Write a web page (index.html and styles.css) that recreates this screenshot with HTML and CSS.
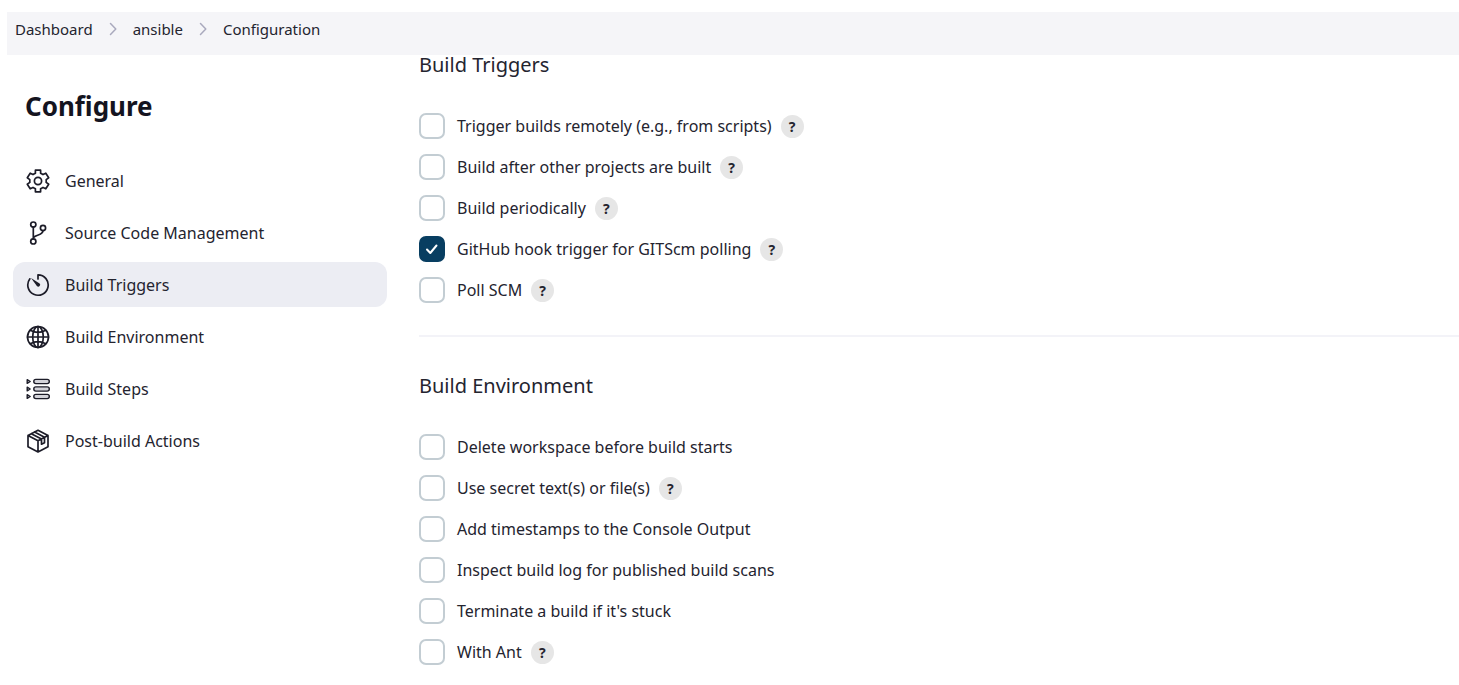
FILE: index.html
```html
<!DOCTYPE html>
<html lang="en">
<head>
<meta charset="utf-8">
<title>ansible Config</title>
<link rel="stylesheet" href="styles.css">
</head>
<body>
<nav class="breadcrumbs" aria-label="Breadcrumb">
  <a href="#">Dashboard</a>
  <svg class="chevron" viewBox="0 0 8 14" aria-hidden="true"><path d="M1.5 1.5 6.8 7l-5.3 5.5"/></svg>
  <a href="#">ansible</a>
  <svg class="chevron" viewBox="0 0 8 14" aria-hidden="true"><path d="M1.5 1.5 6.8 7l-5.3 5.5"/></svg>
  <a href="#">Configuration</a>
</nav>
<div class="layout">
  <aside class="sidebar">
    <h1 class="title">Configure</h1>
    <nav class="tasks" aria-label="Configure">
      <a class="task" href="#general">
        <svg class="icon" viewBox="0 0 24 24" aria-hidden="true"><path d="M9.400 1.200h5.200v3L17 5.600l2.800-1.400 2.900 4.600L20.200 10.600v2.800l2.500 1.800-2.900 4.600L17 18.400l-2.400 1.400v3H9.400v-3L7 18.400l-2.800 1.400-2.900-4.600L3.800 13.400v-2.800L1.300 8.800l2.900-4.600L7 5.600l2.400-1.400z"/><circle cx="12" cy="12" r="3.600"/></svg>
        General</a>
      <a class="task" href="#scm">
        <svg class="icon" viewBox="0 0 24 24" aria-hidden="true"><circle cx="7.300" cy="3.600" r="2.600"/><circle cx="7.300" cy="20.400" r="2.600"/><circle cx="17" cy="7" r="2.600"/><path d="M7.300 6.200v11.600M17 9.600c0 5-6.500 3.500-9.700 7"/></svg>
        Source Code Management</a>
      <a class="task task-active" href="#triggers" aria-current="true">
        <svg class="icon" viewBox="0 0 24 24" aria-hidden="true"><path d="M12 6V1.800a10.200 10.200 0 1 1-8.100 4"/><path class="solid" d="m5 4.900 8.600 5.500a1.900 1.900 0 1 1-2.700 2.700z"/></svg>
        Build Triggers</a>
      <a class="task" href="#environment">
        <svg class="icon" viewBox="0 0 24 24" aria-hidden="true"><circle cx="12" cy="12" r="10.500"/><ellipse cx="12" cy="12" rx="5.300" ry="10.500"/><path d="M12 1.500v21M1.500 12h21M4.300 5.200c4.600 2.700 10.800 2.700 15.400 0M4.300 18.800c4.600-2.700 10.800-2.700 15.400 0"/></svg>
        Build Environment</a>
      <a class="task" href="#steps">
        <svg class="icon icon-list" viewBox="0 0 24 24" aria-hidden="true"><rect x="7.800" y="2.400" width="15.500" height="4.200" rx="2.100"/><rect x="7.800" y="9.900" width="15.500" height="4.200" rx="2.100"/><rect x="7.800" y="17.400" width="15.500" height="4.200" rx="2.100"/><path d="M1.200 2.700 4.200 4.500l-3 1.800zM1.200 10.200l3 1.800-3 1.800zM1.200 17.700l3 1.800-3 1.800z"/></svg>
        Build Steps</a>
      <a class="task" href="#postbuild">
        <svg class="icon" viewBox="0 0 24 24" aria-hidden="true"><path d="m12 1.300 10 5.200v11.200l-10 5.200-10-5.200V6.500zM2 6.500l10 5.300 10-5.300M12 11.800v11.100M5.300 4.700l10.200 5.300v5.200l3-1.500V8.300L8.600 3"/></svg>
        Post-build Actions</a>
    </nav>
  </aside>
  <main class="content">
    <section class="section" id="triggers">
      <h2 class="heading">Build Triggers</h2>
      <div class="options">
        <div class="option"><input class="check" type="checkbox" id="remote"><label for="remote">Trigger builds remotely (e.g., from scripts)</label><button class="help" type="button" aria-label="Help">?</button></div>
        <div class="option"><input class="check" type="checkbox" id="after"><label for="after">Build after other projects are built</label><button class="help" type="button" aria-label="Help">?</button></div>
        <div class="option"><input class="check" type="checkbox" id="periodic"><label for="periodic">Build periodically</label><button class="help" type="button" aria-label="Help">?</button></div>
        <div class="option"><span class="checkwrap"><input class="check" type="checkbox" id="hook" checked><svg class="tick" viewBox="0 0 26 26" aria-hidden="true"><path d="m8 13.500 3.300 3.500 6.200-7.500"/></svg></span><label for="hook">GitHub hook trigger for GITScm polling</label><button class="help" type="button" aria-label="Help">?</button></div>
        <div class="option"><input class="check" type="checkbox" id="poll"><label for="poll">Poll SCM</label><button class="help" type="button" aria-label="Help">?</button></div>
      </div>
    </section>
    <section class="section" id="environment">
      <h2 class="heading">Build Environment</h2>
      <div class="options">
        <div class="option"><input class="check" type="checkbox" id="delete"><label for="delete">Delete workspace before build starts</label></div>
        <div class="option"><input class="check" type="checkbox" id="secret"><label for="secret">Use secret text(s) or file(s)</label><button class="help" type="button" aria-label="Help">?</button></div>
        <div class="option"><input class="check" type="checkbox" id="stamps"><label for="stamps">Add timestamps to the Console Output</label></div>
        <div class="option"><input class="check" type="checkbox" id="inspect"><label for="inspect">Inspect build log for published build scans</label></div>
        <div class="option"><input class="check" type="checkbox" id="stuck"><label for="stuck">Terminate a build if it's stuck</label></div>
        <div class="option"><input class="check" type="checkbox" id="ant"><label for="ant">With Ant</label><button class="help" type="button" aria-label="Help">?</button></div>
      </div>
    </section>
  </main>
</div>
</body>
</html>
```
FILE: styles.css
```css
* { box-sizing: border-box; }
body {
  margin: 12px 0 0 7px;
  background: #fff;
  color: #24242f;
  font: 16px/24px "Noto Sans", "Open Sans", sans-serif;
}
a { color: inherit; text-decoration: none; }
svg { fill: none; stroke: currentColor; stroke-linecap: round; stroke-linejoin: round; flex: none; }
.breadcrumbs {
  display: flex;
  align-items: center;
  gap: 16px;
  padding: 5px 8px 14px;
  background: #f5f5f8;
  font-size: 15px;
}
.chevron { width: 8px; height: 14px; color: #a9a9bd; stroke-width: 1.5; }
.layout { display: grid; grid-template-columns: 374px minmax(0, 1fr); gap: 32px; padding-left: 6px; }
.title { margin: 35px 0 36px 12px; font-size: 26px; line-height: 32px; font-weight: 700; color: #14141f; }
.tasks { display: flex; flex-direction: column; gap: 7px; }
.task {
  display: flex;
  align-items: center;
  gap: 15px;
  min-height: 45px;
  padding: 0 13px;
  border-radius: 12px;
}
.task-active { background: #ecedf3; }
.icon { width: 24px; height: 24px; color: #1c1c28; stroke-width: 1.7; }
.icon-list { fill: #d4d4da; stroke-width: 1.4; }
.solid { fill: currentColor; stroke: none; }
.heading { margin: 0; font-size: 20px; line-height: 20px; font-weight: 400; }
.section { padding-bottom: 32px; }
.section + .section { border-top: 2px solid #f3f3f8; padding-top: 39px; }
.options { display: flex; flex-direction: column; gap: 15px; margin-top: 38px; }
.option { display: flex; align-items: center; min-height: 26px; }
.check {
  appearance: none;
  width: 26px;
  height: 26px;
  margin: 0;
  border: 2px solid #c3cdd3;
  border-radius: 7px;
  background: #fff;
  flex: none;
}
.check:checked { background: #083e61; border-color: #083e61; }
.checkwrap { position: relative; display: flex; }
.tick { position: absolute; inset: 0; color: #fff; stroke-width: 2; pointer-events: none; }
.option label { margin-left: 12px; }
.help {
  width: 23px;
  height: 23px;
  margin: 0 0 0 9px;
  padding: 0;
  border: 0;
  border-radius: 50%;
  background: #e6e6e6;
  color: #24242f;
  font: 700 14px/23px "Noto Sans", sans-serif;
}
```
